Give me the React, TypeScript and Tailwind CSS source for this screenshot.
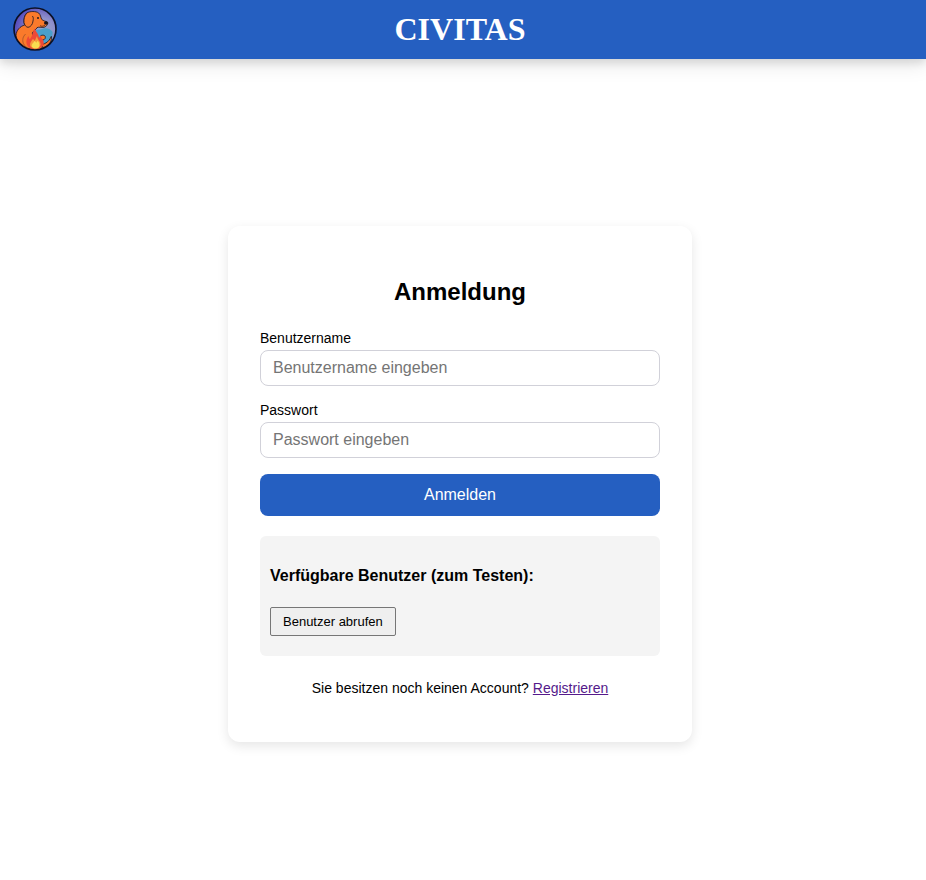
import { useId } from "react";

function DogLogo() {
  return (
    <svg viewBox="15 9 132 132" className="h-11 w-11" role="img" aria-label="Civitas Logo">
      <defs>
        <radialGradient id="sky" cx="0.66" cy="0.55" r="0.62">
          <stop offset="0" stopColor="#9ba6c8" />
          <stop offset="0.5" stopColor="#8f8fca" />
          <stop offset="1" stopColor="#5a50bd" />
        </radialGradient>
        <clipPath id="disc">
          <circle cx="81" cy="75" r="63" />
        </clipPath>
      </defs>
      <circle cx="81" cy="75" r="64" fill="url(#sky)" />
      <g clipPath="url(#disc)">
        <path d="M70 84 C78 76 92 78 104 74 C118 70 128 76 134 84 L132 112 L112 128 L80 122 Z" fill="#4a9fcb" />
        <path
          d="M130 97 C132 112 124 124 108 130 C98 134 88 134 78 130 L92 122 C108 122 122 116 130 97 Z"
          fill="#f87629"
          stroke="#1c1726"
          strokeWidth="2.5"
          strokeLinejoin="round"
        />
        <path
          d="M56 27 C66 21 84 21 92 27 C98 32 98 40 101 46 C106 51 114 52 118 54 C122 59 116 67 108 70 C100 71 92 68 87 71 C86 76 76 80 73 87 C74 102 84 118 104 128 C98 138 88 140 76 139 C46 134 24 116 24 94 C25 79 36 67 50 63 C46 52 48 36 56 27 Z"
          fill="#fa7a2b"
          stroke="#1c1726"
          strokeWidth="2.5"
          strokeLinejoin="round"
        />
        <path
          d="M56 28 C49 34 47 46 48 56 C50 64 54 69 60 70 C68 69 74 61 75 51 C76 45 77 41 74 37"
          fill="#fa7a2b"
          stroke="#1c1726"
          strokeWidth="2.5"
          strokeLinecap="round"
        />
        <path
          d="M53 90 C45 97 42 108 46 118 C50 128 58 132 66 134"
          fill="none"
          stroke="#8f4a28"
          strokeWidth="2"
        />
        <path
          d="M97 96 C104 91 113 94 112 100 C112 106 106 109 101 108"
          fill="#fa7a2b"
          stroke="#1c1726"
          strokeWidth="2.5"
        />
        <path
          d="M62 130 C52 119 54 107 61 96 L65 106 C74 99 72 84 81 73 C82 84 92 89 93 101 L99 94 C98 104 107 106 107 115 C109 126 98 134 84 134 C75 135 67 134 62 130 Z"
          fill="#ee4937"
        />
        <path
          d="M69 129 C62 119 70 113 75 104 L80 111 L87 96 C88 108 98 111 98 122 C96 133 77 136 69 129 Z"
          fill="#f69a3c"
        />
        <path d="M72 128 C69 119 77 117 80 110 L85 116 L89 110 C96 118 96 128 90 132 C83 135 76 134 72 128 Z" fill="#f7dc50" />
        <ellipse cx="114" cy="57" rx="6" ry="5" fill="#17131d" />
        <circle cx="90" cy="42" r="2.8" fill="#17131d" />
        <path d="M96 65 C101 68 107 67 111 63" fill="none" stroke="#1c1726" strokeWidth="2" />
      </g>
      <circle cx="81" cy="75" r="63" fill="none" stroke="#0b1024" strokeWidth="5" />
    </svg>
  );
}

type FieldProps = { label: string; placeholder: string; type: string };

function Field({ label, placeholder, type }: FieldProps) {
  const id = useId();
  return (
    <div className="flex flex-col gap-1">
      <label htmlFor={id} className="text-sm leading-4">
        {label}
      </label>
      <input
        id={id}
        type={type}
        placeholder={placeholder}
        className="h-9 w-full rounded-lg border border-[#d1d1d9] bg-white px-3 text-base placeholder:text-[#757575]"
      />
    </div>
  );
}

export default function App() {
  return (
    <div className="flex min-h-screen flex-col bg-white font-['Liberation_Sans',Arial,sans-serif] text-black">
      <header className="grid h-[59px] grid-cols-[44px_1fr_44px] items-center bg-[#255fc1] pr-[19px] pb-[2px] pl-[13px] shadow-[0_4px_8px_0_rgba(0,0,0,0.1),0_6px_20px_0_rgba(0,0,0,0.1)]">
        <DogLogo />
        <h1 className="text-center font-['Liberation_Serif','Times_New_Roman',serif] text-[32px] leading-9 font-bold text-white">
          CIVITAS
        </h1>
      </header>

      <main className="flex flex-1 items-center justify-center pt-[29px] pr-[6px]">
        <section className="w-full max-w-[464px] rounded-xl bg-white px-8 pt-[52px] pb-[46px] shadow-[0_4px_12px_rgba(0,0,0,0.1)]">
          <h2 className="mb-6 text-center text-2xl leading-7 font-bold">Anmeldung</h2>

          <form className="flex flex-col gap-4" onSubmit={(e) => e.preventDefault()}>
            <Field label="Benutzername" placeholder="Benutzername eingeben" type="text" />
            <Field label="Passwort" placeholder="Passwort eingeben" type="password" />
            <button type="submit" className="h-[42px] rounded-lg bg-[#255fc1] text-base text-white">
              Anmelden
            </button>
          </form>

          <div className="mt-5 rounded-md bg-[#f4f4f4] px-[10px] pt-[30px] pb-5">
            <h3 className="mb-[21px] text-base leading-5 font-bold">Verfügbare Benutzer (zum Testen):</h3>
            <button
              type="button"
              className="block h-[29px] rounded-xs border border-[#767676] bg-[#efefef] px-3 text-[13px]"
            >
              Benutzer abrufen
            </button>
          </div>

          <p className="mt-6 text-center text-sm leading-4">
            Sie besitzen noch keinen Account?{" "}
            <a href="#registrieren" className="text-[#551a8b] underline">
              Registrieren
            </a>
          </p>
        </section>
      </main>
    </div>
  );
}
